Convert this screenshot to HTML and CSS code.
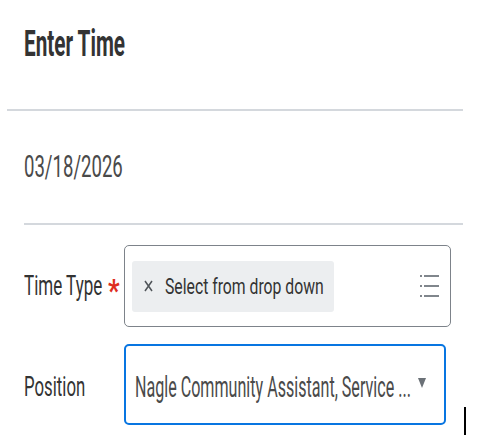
FILE: index.html
```html
<!DOCTYPE html>
<html lang="en">
<head>
    <meta charset="UTF-8" />
    <meta name="viewport" content="width=device-width, initial-scale=1" />
    <title>Enter Time</title>
    <link rel="stylesheet" href="styles.css">
</head>
<body>
    <header class="header">
        <h1 class="titulo"><span class="sq">Enter Time</span></h1>
    </header>

    <section class="fecha">
        <span class="sq">03/18/2026</span>
    </section>

    <main class="form">
        <div class="fila fila-tipo">
            <div class="etiqueta">
                <span class="sq sq-label">Time Type</span>
                <span class="sq estrella">*</span>
            </div>
            <div class="campo campo-tipo">
                <div class="chip">
                    <svg class="chip-x" width="9" height="12" viewBox="0 0 9 12" aria-hidden="true">
                        <path d="M1 1 L8 11 M8 1 L1 11" stroke="#4f5459" stroke-width="1.5" fill="none"/>
                    </svg>
                    <span class="sq chip-texto">Select from drop down</span>
                </div>
                <svg class="icono-lista" width="20" height="24" viewBox="0 0 20 24" aria-hidden="true">
                    <g stroke="#80868c" stroke-width="2">
                        <path d="M0 2 H2 M4 2 H19"/>
                        <path d="M0 12 H2 M4 12 H19"/>
                        <path d="M0 22 H2 M4 22 H19"/>
                    </g>
                </svg>
            </div>
        </div>

        <div class="fila fila-posicion">
            <div class="etiqueta etiqueta-pos">
                <span class="sq sq-label">Position</span>
            </div>
            <div class="campo campo-pos">
                <div class="valor">
                    <span class="sq valor-texto">Nagle Community Assistant, Service ...</span>
                </div>
                <svg class="flecha" width="8" height="10" viewBox="0 0 8 10" aria-hidden="true">
                    <polygon points="0,0 8,0 4,10" fill="#6b7177"/>
                </svg>
            </div>
            <span class="cursor"></span>
        </div>
    </main>
</body>
</html>
```

FILE: styles.css
```css
:root {
    --color-texto: #333333;
    --color-suave: #4a4a4a;
    --color-linea: #d4d8dd;
    --color-borde: #7d838a;
    --color-azul: #0875e1;
    --color-chip: #eceef0;
    --color-rojo: #de2e21;
}

*, *::before, *::after {
    box-sizing: border-box;
    margin: 0;
    padding: 0;
}

body {
    font-family: Roboto, "Noto Sans", sans-serif;
    background: #ffffff;
    color: var(--color-texto);
    width: 487px;
    height: 435px;
    overflow: hidden;
}

/* texto estrecho, como en la captura */
.sq {
    display: inline-block;
    line-height: 1;
    white-space: nowrap;
    transform-origin: 0 50%;
}

.header {
    margin-left: 7px;
    width: 456px;
    padding: 26px 0 47px 17px;
    border-bottom: 2px solid var(--color-linea);
}

.titulo {
    display: flex;
    font-size: 36px;
    font-weight: 700;
    line-height: 1;
    height: 36px;
}

.titulo .sq {
    transform: scaleX(0.575);
}

.fecha {
    display: flex;
    margin-left: 24px;
    width: 439px;
    padding: 39px 0 41px;
    border-bottom: 2px solid var(--color-linea);
    font-size: 32px;
    line-height: 1;
    color: var(--color-suave);
}

.fecha .sq {
    transform: scaleX(0.58);
}

.form {
    padding: 20px 0 0 24px;
    display: flex;
    flex-direction: column;
    gap: 17px;
}

.fila {
    display: grid;
    grid-template-columns: 100px auto;
    align-items: center;
    position: relative;
}

.etiqueta {
    display: flex;
    align-items: center;
    width: 100px;
    height: 60px;
}

.sq-label {
    flex-shrink: 0;
    font-size: 27px;
    transform: scaleX(0.63);
}

.estrella {
    flex-shrink: 0;
    margin-left: -40px;
    margin-top: 7px;
    font-size: 32px;
    font-weight: 700;
    color: var(--color-rojo);
    transform: scaleX(0.8);
}

.etiqueta-pos {
    padding-top: 5px;
}

.etiqueta-pos .sq-label {
    font-size: 28px;
    transform: scaleX(0.6);
}

.campo {
    display: flex;
    align-items: center;
    border-radius: 5px;
}

.campo-tipo {
    width: 327px;
    height: 82px;
    border: 1px solid var(--color-borde);
    padding: 0 10px 0 7px;
}

.chip {
    display: flex;
    align-items: center;
    width: 202px;
    height: 51px;
    background: var(--color-chip);
    border-radius: 3px;
    padding-left: 12px;
}

.chip-x {
    flex-shrink: 0;
    margin-right: 12px;
}

.chip-texto {
    flex-shrink: 0;
    font-size: 22.5px;
    transform: scaleX(0.7);
}

.icono-lista {
    margin-left: auto;
    flex-shrink: 0;
}

.campo-pos {
    width: 322px;
    height: 81px;
    border: 2px solid var(--color-azul);
    padding: 0 18px 0 9px;
}

.valor {
    display: flex;
    flex: 1;
    min-width: 0;
    padding-top: 6px;
}

.valor-texto {
    flex-shrink: 0;
    font-size: 29px;
    color: var(--color-suave);
    transform: scaleX(0.555);
}

.flecha {
    flex-shrink: 0;
    margin-top: -4px;
}

/* cursor de texto sobre el borde inferior */
.cursor {
    position: absolute;
    left: 440px;
    top: 63px;
    width: 2px;
    height: 30px;
    background: #000000;
}
```
